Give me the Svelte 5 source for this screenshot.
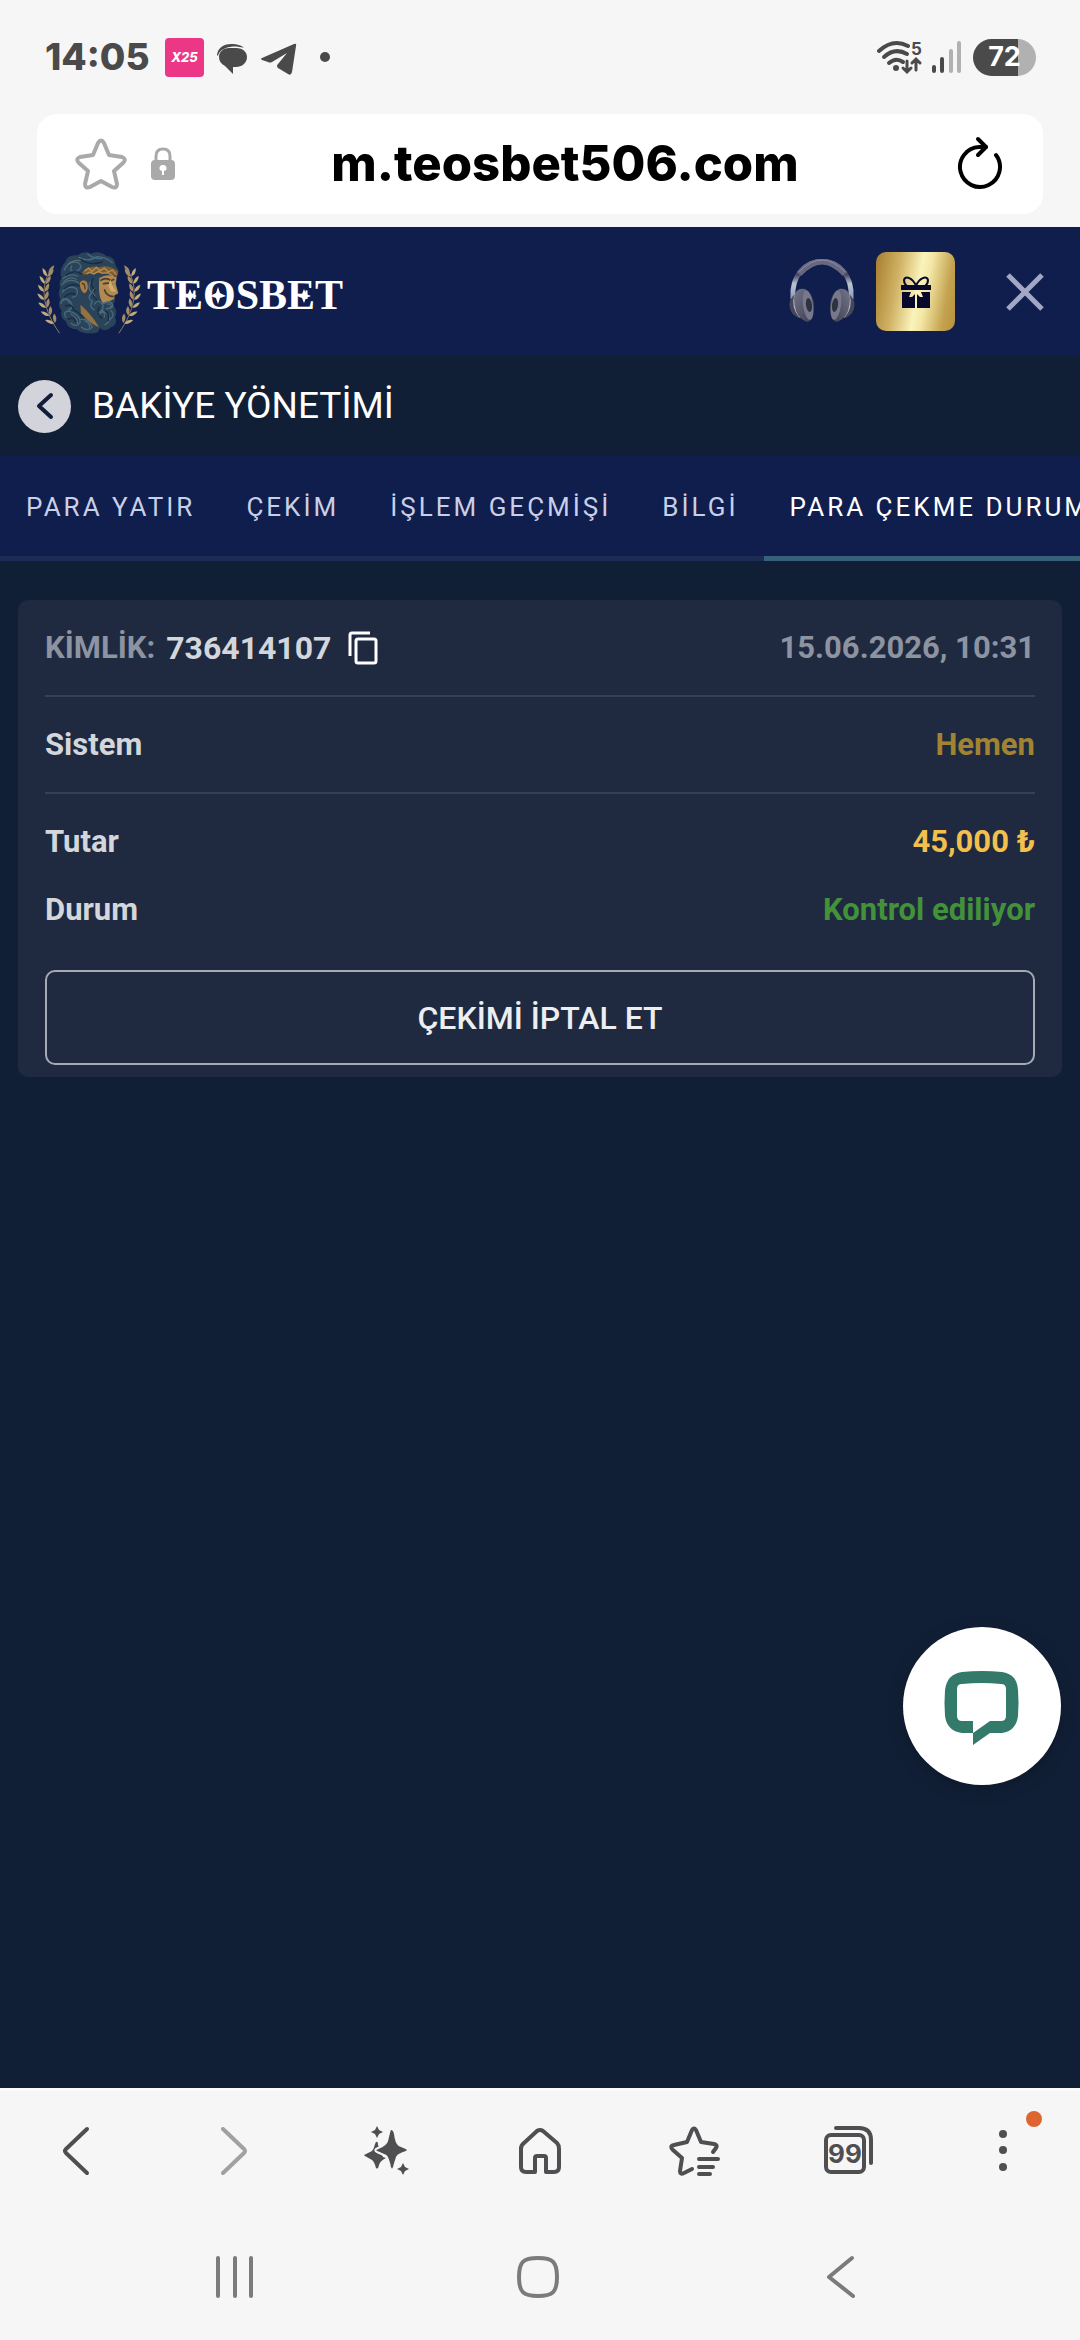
<script>
  const tabs = ['PARA YATIR', 'ÇEKİM', 'İŞLEM GEÇMİŞİ', 'BİLGİ', 'PARA ÇEKME DURUMU'];
  let active = $state(4);
  let address = $state('m.teosbet506.com');

  const leaves = [
    { x: 49, y: 100, a: -4 },
    { x: 43, y: 122, a: -12 },
    { x: 40, y: 146, a: -18 },
    { x: 40, y: 170, a: -24 },
    { x: 45, y: 194, a: -32 },
    { x: 54, y: 218, a: -40 },
    { x: 68, y: 241, a: -46 }
  ];
</script>

{#snippet laurel()}
  <path d="M64 78C30 120 26 190 86 274" fill="none" stroke="#8d7a5c" stroke-width="3" />
  <path d="M70 70Q50 78 53 96Q66 90 70 70Z" fill="#a08a66" />
  {#each leaves as l}
    <g transform="translate({l.x} {l.y}) rotate({l.a})">
      <path d="M-1 3Q-15 -2 -13 -23Q0 -15 -1 3Z" fill="#c2aa83" />
      <path d="M1 4Q4 -14 20 -17Q18 2 1 4Z" fill="#a38c67" />
    </g>
  {/each}
{/snippet}

<div class="screen">
  <div class="status">
    <time class="clock">14:05</time>
    <span class="promo"><i>X25</i></span>
    <svg class="msg" width="32" height="32" viewBox="0 0 32 32">
      <path d="M1 12C2 5 7 1 15 1C21 1 25 2 28 5C22 3 15 3 10 5C5 7 3 9 2 13Z" fill="#4a4a4a" />
      <path d="M13 5H20C27 5 31 9 31 14C31 20 26 24 20 24H17V31L9 23C5 21 3 18 3 14C3 9 7 5 13 5Z" fill="#4a4a4a" />
    </svg>
    <svg class="plane" width="38" height="34" viewBox="0 0 38 34">
      <path d="M2 16L34 2Q37 1 36 4L32 30Q31 34 28 32L18 26Q16 24 18 22L27 11L12 20Q10 21 8 20L2 18Q0 17 2 16Z" fill="#4a4a4a" />
    </svg>
    <span class="dot"></span>
    <span class="grow"></span>
    <svg class="wifi" width="48" height="36" viewBox="0 -2 48 36">
      <g fill="none" stroke="#4a4a4a" stroke-width="4" stroke-linecap="round">
        <path d="M2 10Q16 -3 31 5" />
        <path d="M7 16Q18 6 30 13" />
        <path d="M12 22Q19 16 26 21" />
        <g stroke-width="3"><path d="M30 20V30M26 27L30 31L34 27M39 29V19M35 22L39 18L43 22" /></g>
      </g>
      <circle cx="19" cy="27" r="3" fill="#4a4a4a" />
      <text x="34" y="14" class="band">5</text>
    </svg>
    <svg class="signal" width="32" height="34" viewBox="0 0 32 34">
      <g stroke-width="4" stroke-linecap="round">
        <path d="M3 27V31M11 19V31" stroke="#4a4a4a" />
        <path d="M20 11V31M28 3V31" stroke="#b1b1b1" />
      </g>
    </svg>
    <span class="battery">72</span>
  </div>

  <div class="toolbar">
    <div class="address">
      <button aria-label="Yer imi">
        <svg width="52" height="52" viewBox="0 0 52 52">
          <path d="M23 5Q26 0 29 5L34 17L47 19Q52 21 48 25L39 33L42 46Q42 51 37 49L26 43L15 49Q10 51 10 46L13 33L4 25Q0 21 5 19L18 17Z" fill="none" stroke="#a9a9a9" stroke-width="4" stroke-linejoin="round" />
        </svg>
      </button>
      <svg class="lock" width="24" height="34" viewBox="0 0 24 34">
        <path d="M5 14V9Q5 2 12 2Q19 2 19 9V14" fill="none" stroke="#a9a9a9" stroke-width="3" />
        <rect x="0" y="13" width="24" height="20" rx="4" fill="#a9a9a9" />
        <path d="M12 18A3 3 0 0 1 13 24V28H11V24A3 3 0 0 1 12 18Z" fill="#fff" />
      </svg>
      <input type="text" aria-label="Adres" bind:value={address} />
      <button aria-label="Yenile">
        <svg width="48" height="56" viewBox="0 0 48 56">
          <g fill="none" stroke="#000" stroke-width="4" stroke-linecap="round" stroke-linejoin="round">
            <path d="M41 19A20 20 0 1 1 24 11H31" />
            <path d="M23 3L31 11L23 19" />
          </g>
        </svg>
      </button>
    </div>
  </div>

  <header class="brand">
    <a class="logo" href="/" aria-label="TEOSBET">
      <svg width="320" height="100" viewBox="0 0 320 100">
        <g transform="scale(.3333)">
          {@render laurel()}
          <g transform="translate(349 0) scale(-1 1)">{@render laurel()}</g>
          <path d="M103 60Q108 36 140 40Q158 24 180 35Q206 24 226 42Q252 44 254 70L262 84Q260 98 257 108L255 126L261 154L250 163L252 176L246 190Q262 206 252 226Q262 246 240 256Q226 272 206 258Q206 276 178 274Q150 276 138 262Q112 264 104 238Q86 226 92 206Q78 190 88 172Q78 152 88 138Q82 120 92 108Q82 84 103 60Z" fill="#2a4359" />
          <path d="M205 108Q230 92 257 106L254 126L262 154L250 160L250 170L218 186Q200 168 205 108Z" fill="#b18a52" />
          <path d="M208 116Q224 104 240 116L250 112M216 126Q232 120 244 128M220 142Q226 164 248 164" fill="none" stroke="#4c3c2e" stroke-width="5" />
          <path d="M238 112L246 134L256 150L240 148L232 132Z" fill="#d2aa6c" />
          <path d="M146 122Q156 108 168 120Q176 146 160 154Q146 144 146 122Z" fill="#a77c46" />
          <path d="M152 126Q162 120 162 142" fill="none" stroke="#4c3c2e" stroke-width="4" />
          <path d="M148 188Q170 206 192 236L204 256Q176 246 150 214Z" fill="#94713f" />
          <path d="M152 92Q176 66 206 76Q230 66 262 88L258 104Q220 86 158 98Z" fill="#7d5d32" />
          <path d="M160 88L172 78L184 88L196 76L208 86L220 78L232 90L244 84L256 98M166 96L176 90L188 96L202 88L214 94L230 92L246 102" fill="none" stroke="#b98f50" stroke-width="4" />
          <g fill="none" stroke-width="4" stroke-linecap="round">
            <path stroke="#466b84" d="M100 84Q112 54 142 62Q160 76 136 88Q112 92 122 72M144 46Q172 62 198 44Q222 44 244 62M170 36Q186 50 212 50M96 110Q116 92 140 102M92 128Q118 106 142 122M94 150Q112 128 136 140Q146 160 124 166M90 184Q96 158 116 176Q132 196 112 204M104 226Q94 206 116 208Q144 216 148 240Q138 258 120 244M150 232Q174 230 184 256Q166 270 152 256M178 120Q168 138 182 152Q166 168 184 178Q172 194 190 204M190 186Q204 168 216 190Q218 210 200 212M204 220Q216 200 232 218Q242 238 222 248M216 184Q240 172 246 192Q240 200 226 200M240 206Q254 218 238 232" />
            <path stroke="#172b42" d="M106 100Q130 80 152 96M100 140Q124 120 144 132M100 166Q118 148 134 158M104 192Q124 184 128 204Q146 212 156 228M112 232Q128 222 134 240M186 110Q174 132 192 144Q180 160 196 172M204 196Q194 214 212 228M224 208Q236 214 232 236M150 52Q172 72 214 60" />
            <path stroke="#7f8a79" stroke-width="2" d="M112 66Q126 52 148 56M98 118Q120 100 136 112M96 176Q108 166 116 184M120 216Q140 226 140 244M162 238Q176 242 176 256M190 140Q180 148 192 162M212 204Q222 208 220 226M228 186Q240 184 240 194" />
          </g>
        </g>
        <text class="word" x="116" y="67">TEOSBET</text>
        <g fill="#fff">
          <path d="M159 47L161 52L166 54L161 56L159 61L157 56L152 54L157 52Z" />
          <path d="M187 45L189 51L195 54L189 56L187 62L185 56L179 54L185 51Z" />
          <path d="M273 47L275 52L280 54L275 56L273 61L271 56L266 54L271 52Z" />
        </g>
      </svg>
    </a>
    <span class="grow"></span>
    <button aria-label="Destek">
      <svg width="66" height="66" viewBox="0 2 66 66">
        <defs>
          <linearGradient id="band" x1="0" y1="0" x2="0" y2="1">
            <stop offset="0" stop-color="#8688a5" />
            <stop offset=".35" stop-color="#47475d" />
            <stop offset=".6" stop-color="#b9c4d6" />
            <stop offset="1" stop-color="#8f9ab5" />
          </linearGradient>
          <linearGradient id="cup" x1="0" y1="0" x2="1" y2="1">
            <stop offset="0" stop-color="#74758a" />
            <stop offset="1" stop-color="#3b3b4c" />
          </linearGradient>
        </defs>
        <path d="M4 42C0 -8 66 -8 62 42" fill="none" stroke="url(#band)" stroke-width="5" />
        <path d="M10 17Q33 -8 56 17" fill="none" stroke="#67677f" stroke-width="6" />
        <path d="M10 15Q33 -9 56 15" fill="none" stroke="#8d8daa" stroke-width="1" />
        <g id="ear">
          <path d="M5 38Q-3 46 3 56Q7 61 12 61Z" fill="#454759" />
          <path d="M6 39Q3 50 11 60" fill="none" stroke="#b3bdd0" stroke-width="2" />
          <path d="M16 32Q25 37 25 51Q25 64 18 65Q10 62 7 54Q3 40 7 35Q10 31 16 32Z" fill="url(#cup)" />
          <ellipse cx="19" cy="48" rx="5" ry="15" fill="#77788b" transform="rotate(-8 19 48)" />
          <ellipse cx="20" cy="48" rx="3" ry="7" fill="#303140" transform="rotate(-8 20 48)" />
        </g>
        <use href="#ear" transform="translate(66 0) scale(-1 1)" />
      </svg>
    </button>
    <button class="gift" aria-label="Bonuslar">
      <svg width="32" height="34" viewBox="0 0 32 34">
        <g fill="none" stroke="#06082c" stroke-width="2">
          <path d="M16 11C13 3 5 0 4 5Q4 9 7 11M16 11C19 3 27 0 28 5Q28 9 25 11" />
        </g>
        <path d="M1 10H31V15H1ZM2 17H11L9 22L12 22L15 19V33H2ZM17 19L20 22L23 22L21 17H30V33H17Z" fill="#06082c" />
      </svg>
    </button>
    <button aria-label="Kapat">
      <svg width="40" height="40" viewBox="0 0 40 40">
        <path d="M3 3L37 37M37 3L3 37" stroke="#a1a7c4" stroke-width="5" />
      </svg>
    </button>
  </header>

  <div class="title">
    <button class="back" aria-label="Geri">
      <svg width="20" height="30" viewBox="0 0 20 30">
        <path d="M16 4L4 15L16 26" fill="none" stroke="#101e38" stroke-width="4" stroke-linecap="round" stroke-linejoin="round" />
      </svg>
    </button>
    <h1>BAKİYE YÖNETİMİ</h1>
  </div>

  <nav class="tabs">
    {#each tabs as tab, i}
      <button class:active={active === i} onclick={() => (active = i)}>{tab}</button>
    {/each}
  </nav>

  <main>
    <section class="card">
      <div class="row line">
        <span class="muted">KİMLİK:</span>
        <span class="id">736414107</span>
        <button class="copy" aria-label="Kopyala">
          <svg width="30" height="34" viewBox="0 0 30 34">
            <path d="M2 25V4Q2 2 4 2H22" fill="none" stroke="#fff" stroke-width="3" />
            <rect x="8" y="8" width="20" height="24" rx="2" fill="none" stroke="#fff" stroke-width="3" />
          </svg>
        </button>
        <span class="grow"></span>
        <time class="muted">15.06.2026, 10:31</time>
      </div>
      <div class="row line"><span>Sistem</span><span class="grow"></span><span class="system">Hemen</span></div>
      <div class="sums">
        <div class="row"><span>Tutar</span><span class="grow"></span><span class="amount">45,000 ₺</span></div>
        <div class="row"><span>Durum</span><span class="grow"></span><span class="state">Kontrol ediliyor</span></div>
      </div>
      <button class="cancel">ÇEKİMİ İPTAL ET</button>
    </section>
  </main>

  <button class="chat" aria-label="Canlı destek">
    <svg width="76" height="76" viewBox="0 0 76 76">
      <path fill="#347a6b" fill-rule="evenodd" d="M18 2Q38 0 58 2Q73 4 74 20Q75 32 74 46Q72 61 58 63H46L29 75V63H18Q3 61 1 46Q0 32 1 20Q3 4 18 2ZM18 14Q13 14 13 19V46Q13 51 18 51H29V63L46 51H57Q62 51 62 46V19Q62 14 57 14Q38 12 18 14Z" />
    </svg>
  </button>

  <footer>
    <nav class="browser" aria-label="Tarayıcı">
      <button aria-label="Geri">
        <svg width="52" height="52" viewBox="0 0 52 52"><path d="M36 4L15 24Q13 26 15 28L36 48" /></svg>
      </button>
      <button class="faded" aria-label="İleri">
        <svg width="52" height="52" viewBox="0 0 52 52"><path d="M18 4L39 24Q41 26 39 28L18 48" /></svg>
      </button>
      <button aria-label="Asistan">
        <svg width="52" height="52" viewBox="0 0 52 52">
          <g class="solid">
            <path d="M16 17Q18 16 18 20L20 24L23 32L26 33Q20 36 19 40Q18 45 16 43Q14 36 12 35L5 31Q3 30 6 29L12 26Q14 24 15 19Z" />
            <path stroke="#f6f6f6" stroke-width="2" d="M31 4Q34 4 35 9Q36 18 39 20L46 23Q50 25 46 27Q39 29 37 32Q35 38 34 42Q32 47 30 42Q28 33 26 31L17 27Q13 25 18 23Q26 20 27 16L29 8Q30 4 31 4Z" />
            <path d="M17 1L19 5L23 7L19 9L17 13L15 9L11 7L15 5ZM43 38L45 42L49 44L45 46L43 50L41 46L37 44L41 42Z" />
          </g>
        </svg>
      </button>
      <button aria-label="Ana sayfa">
        <svg width="52" height="52" viewBox="0 0 52 52"><path d="M10 18L23 6Q26 4 29 6L43 18Q45 20 45 24V42Q45 47 40 47H32V33Q32 31 30 31H23Q21 31 21 33V47H12Q7 47 7 42V24Q7 20 10 18Z" /></svg>
      </button>
      <button aria-label="Yer imleri">
        <svg width="52" height="52" viewBox="0 0 52 52"><path d="M45 27L48 23Q50 20 46 19L33 17L28 5Q26 2 24 5L19 17L6 20Q1 21 5 25L14 33L12 46Q12 50 16 48L24 44M31 34H50M31 42H45M31 49H42" /></svg>
      </button>
      <button aria-label="Sekmeler">
        <svg width="52" height="52" viewBox="0 0 52 52">
          <rect x="3" y="10" width="38" height="37" rx="5" />
          <path d="M13 3H36Q48 3 48 15V38" />
          <text class="count" x="22" y="38">99</text>
        </svg>
      </button>
      <button class="more" aria-label="Menü">
        <svg width="52" height="52" viewBox="0 0 52 52">
          <g class="solid"><circle cx="26" cy="9" r="4" /><circle cx="26" cy="25" r="4" /><circle cx="26" cy="42" r="4" /></g>
        </svg>
        <span class="badge"></span>
      </button>
    </nav>
    <nav class="system-nav" aria-label="Sistem">
      <button aria-label="Son uygulamalar">
        <svg width="44" height="44" viewBox="0 0 44 44"><path d="M5 3V41M22 3V41M38 3V41" /></svg>
      </button>
      <button aria-label="Ana ekran">
        <svg width="44" height="44" viewBox="0 0 44 44"><path d="M22 3C37 3 41 7 41 22C41 37 37 41 22 41C7 41 3 37 3 22C3 7 7 3 22 3Z" /></svg>
      </button>
      <button aria-label="Geri git">
        <svg width="44" height="44" viewBox="0 0 44 44"><path d="M33 3L10 22L34 41" /></svg>
      </button>
    </nav>
  </footer>
</div>

<style>
  :global(body) { background: #111f36; }
  .screen {
    min-height: 100vh;
    display: flex;
    flex-direction: column;
    overflow-x: hidden;
    background: #111f36;
    font-family: Roboto, "Noto Sans", sans-serif;
  }
  button {
    display: flex;
    align-items: center;
    justify-content: center;
    padding: 0;
    border: 0;
    background: none;
    color: inherit;
    font: inherit;
    cursor: pointer;
  }
  svg { display: block; flex: none; }
  .grow { flex: 1; }

  .status {
    height: 114px;
    display: flex;
    align-items: center;
    padding: 0 44px 0 45px;
    background: #f6f6f6;
    color: #4a4a4a;
    font-family: Inter, sans-serif;
  }
  .clock { width: 104px; font-size: 37px; line-height: 48px; font-weight: 800; white-space: nowrap; }
  .promo {
    width: 39px;
    height: 39px;
    margin-left: 16px;
    display: flex;
    align-items: center;
    justify-content: center;
    border-radius: 4px;
    background: #ec3786;
    color: #fff;
    font-size: 13px;
    font-weight: 800;
  }
  .msg { margin-left: 12px; margin-top: 4px; }
  .plane { margin-left: 12px; margin-top: 4px; }
  .dot { width: 10px; height: 10px; margin-left: 22px; border-radius: 50%; background: #4a4a4a; }
  .signal { margin-left: 6px; }
  .band { font: 700 17px Inter, sans-serif; fill: #4a4a4a; }
  .battery {
    width: 63px;
    height: 37px;
    margin-left: 10px;
    border-radius: 19px;
    background: linear-gradient(90deg, #4a4a4a 72%, #b1b1b1 72%);
    color: #fff;
    font-size: 27px;
    line-height: 36px;
    font-weight: 700;
    text-align: center;
  }

  .toolbar { padding: 0 37px 13px; background: #f6f6f6; }
  .address {
    height: 100px;
    display: flex;
    align-items: center;
    padding: 0 40px 0 38px;
    border-radius: 20px;
    background: #fff;
  }
  .lock { margin-left: 24px; }
  .address input {
    flex: 1;
    min-width: 0;
    border: 0;
    outline: 0;
    padding: 0;
    background: none;
    color: #000;
    font: 800 49px/64px Inter, sans-serif;
    text-align: center;
  }

  .brand {
    height: 129px;
    display: flex;
    align-items: center;
    padding: 0 35px 0 31px;
    background: #101e4d;
  }
  .word { font: bold 42px "Liberation Serif", serif; fill: #fff; }
  .gift {
    width: 79px;
    height: 79px;
    margin: 0 50px 0 21px;
    border-radius: 10px;
    background: linear-gradient(100deg, #a67d2e, #d0b264 28%, #faf3bb 52%, #f3e7a5 62%, #c4a250 85%, #b8923d);
  }

  .title { height: 100px; display: flex; align-items: center; gap: 21px; padding: 0 18px; }
  .back { width: 53px; height: 53px; border-radius: 50%; background: #d2d3db; }
  h1 { margin: 0; color: #fff; font-size: 37px; line-height: 44px; font-weight: 400; }

  .tabs { display: flex; overflow: hidden; background: #101e4d; }
  .tabs button {
    flex: none;
    height: 105px;
    padding: 2px 25px 0 26px;
    border-bottom: 5px solid #1c2a56;
    color: #c9cfe6;
    font-size: 26px;
    line-height: 32px;
    letter-spacing: 3px;
    white-space: nowrap;
  }
  .tabs button.active { border-color: #376179; color: #fff; }

  main { flex: 1; padding: 39px 18px; }
  .card {
    padding: 0 27px 12px;
    border-radius: 10px;
    background: #1f2a40;
    color: #d3d6db;
    font-size: 31px;
    line-height: 36px;
    font-weight: 700;
  }
  .row { height: 68px; display: flex; align-items: center; }
  .row.line { height: 95px; border-bottom: 2px solid #344056; }
  .sums { padding: 14px 0 26px; }
  .muted { color: #8d93a0; }
  .id { margin-left: 11px; font-size: 32px; }
  .copy { margin-left: 17px; }
  .system { color: #a18332; }
  .amount { color: #f3c04e; }
  .state { color: #439239; }
  .cancel {
    width: 100%;
    height: 95px;
    border: 2px solid #a5aab3;
    border-radius: 10px;
    color: #eceef1;
    font-size: 32px;
    font-weight: 500;
  }

  .chat {
    position: fixed;
    right: 19px;
    bottom: 555px;
    width: 158px;
    height: 158px;
    border-radius: 50%;
    background: #fff;
    box-shadow: 0 4px 16px rgba(0, 0, 0, .25);
  }
  .chat svg { margin-top: 4px; }

  footer { background: #f6f6f6; }
  .browser { display: flex; height: 120px; padding-bottom: 3px; border-top: 3px solid #fcfcfc; }
  .browser button { position: relative; flex: 1; }
  .browser svg, .system-nav svg { fill: none; stroke: #4f4f52; stroke-width: 4; stroke-linecap: round; stroke-linejoin: round; }
  .faded { opacity: .5; }
  .browser .solid { fill: #4f4f52; stroke: none; }
  .count { font: bold 26px Inter, sans-serif; fill: #4f4f52; stroke: none; text-anchor: middle; }
  .badge { position: absolute; top: 20px; right: 38px; width: 16px; height: 16px; border-radius: 50%; background: #dd6630; }
  .system-nav { display: flex; justify-content: center; height: 126px; padding: 0 87px 0 83px; }
  .system-nav button { flex: 1; }
  .browser ~ .system-nav svg { stroke: #7b7b7b; }
</style>
